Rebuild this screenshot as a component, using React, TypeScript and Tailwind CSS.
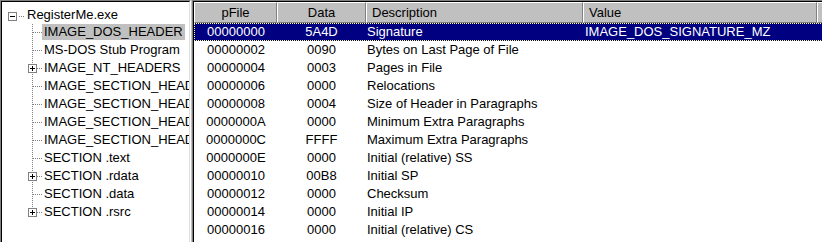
const tree = [
  { label: "IMAGE_DOS_HEADER", plus: false, selected: true },
  { label: "MS-DOS Stub Program", plus: false },
  { label: "IMAGE_NT_HEADERS", plus: true },
  { label: "IMAGE_SECTION_HEADER .text", plus: false },
  { label: "IMAGE_SECTION_HEADER .rdata", plus: false },
  { label: "IMAGE_SECTION_HEADER .data", plus: false },
  { label: "IMAGE_SECTION_HEADER .rsrc", plus: false },
  { label: "SECTION .text", plus: false },
  { label: "SECTION .rdata", plus: true },
  { label: "SECTION .data", plus: false },
  { label: "SECTION .rsrc", plus: true, last: true },
];

const rows = [
  ["00000000", "5A4D", "Signature", "IMAGE_DOS_SIGNATURE_MZ"],
  ["00000002", "0090", "Bytes on Last Page of File", ""],
  ["00000004", "0003", "Pages in File", ""],
  ["00000006", "0000", "Relocations", ""],
  ["00000008", "0004", "Size of Header in Paragraphs", ""],
  ["0000000A", "0000", "Minimum Extra Paragraphs", ""],
  ["0000000C", "FFFF", "Maximum Extra Paragraphs", ""],
  ["0000000E", "0000", "Initial (relative) SS", ""],
  ["00000010", "00B8", "Initial SP", ""],
  ["00000012", "0000", "Checksum", ""],
  ["00000014", "0000", "Initial IP", ""],
  ["00000016", "0000", "Initial (relative) CS", ""],
];

const ExpandBox = ({ x, y, plus }: { x: number; y: number; plus: boolean }) => (
  <g shapeRendering="crispEdges">
    <rect x={x + 0.5} y={y + 0.5} width={8} height={8} fill="white" stroke="#808080" />
    <line x1={x + 2} y1={y + 4.5} x2={x + 7} y2={y + 4.5} stroke="black" />
    {plus && <line x1={x + 4.5} y1={y + 2} x2={x + 4.5} y2={y + 7} stroke="black" />}
  </g>
);

const TreeRow = ({ label, plus, selected, last }: { label: string; plus: boolean; selected?: boolean; last?: boolean }) => (
  <div className="flex h-[18px] overflow-hidden whitespace-nowrap pl-[22px]">
    <svg width="18" height="18" className="shrink-0">
      <g stroke="#808080" strokeDasharray="1 1" shapeRendering="crispEdges">
        <line x1="8.5" y1="0" x2="8.5" y2={last ? 9 : 18} />
        <line x1="9" y1="8.5" x2="18" y2="8.5" />
      </g>
      {plus && <ExpandBox x={4} y={4} plus />}
    </svg>
    <span className={"h-[16px] min-w-0 overflow-hidden px-[2px] leading-[16px] text-black " + (selected ? "bg-[#c0c0c0]" : "")}>{label}</span>
  </div>
);

const TreePanel = () => (
  <div className="h-full w-[191px] shrink-0 border-l border-t border-r border-[#808080] border-r-white">
    <div className="h-full overflow-hidden border-l border-t border-r border-black border-r-[#dfdfdf] bg-white pt-[4px]">
      <div className="flex h-[18px] whitespace-nowrap pl-[2px]">
        <svg width="21" height="18" className="shrink-0">
          <line x1="15" y1="10.5" x2="21" y2="10.5" stroke="#808080" strokeDasharray="1 1" shapeRendering="crispEdges" />
          <ExpandBox x={4} y={6} plus={false} />
        </svg>
        <span className="h-[16px] px-[2px] leading-[18px]">RegisterMe.exe</span>
      </div>
      {tree.map((t) => (
        <TreeRow key={t.label} {...t} />
      ))}
    </div>
  </div>
);

const HeaderCell = ({ w, children, center }: { w: string; children?: string; center?: boolean }) => (
  <div className={`${w} h-[21px] shrink-0 border-t border-l border-white border-r border-r-[#808080] border-b border-b-[#808080] leading-[19px] ${center ? "text-center" : "pl-[5px]"}`}>
    {children}
  </div>
);

const ListPanel = () => (
  <div className="h-full flex-1 border-l border-t border-[#808080]">
    <div className="h-full overflow-hidden border-l border-t border-black bg-white">
      <div className="flex bg-[#c0c0c0] text-black">
        <HeaderCell w="w-[83px]" center>pFile</HeaderCell>
        <HeaderCell w="w-[89px]" center>Data</HeaderCell>
        <HeaderCell w="w-[217px]">Description</HeaderCell>
        <HeaderCell w="w-[234px]">Value</HeaderCell>
        <HeaderCell w="w-[60px]" />
      </div>
      {rows.map((r, i) => (
        <div
          key={r[0]}
          className={
            "flex h-[18px] whitespace-nowrap leading-[16px] " +
            (i === 0 ? "border border-dotted border-[#ffff80] bg-[#000080] text-white" : "border border-transparent text-black")
          }
        >
          <div className="w-[82px] shrink-0 text-center">{r[0]}</div>
          <div className="w-[89px] shrink-0 text-center">{r[1]}</div>
          <div className="w-[217px] shrink-0 pl-[1px]">{r[2]}</div>
          <div className="w-[234px] shrink-0 pl-[2px]">{r[3]}</div>
        </div>
      ))}
    </div>
  </div>
);

export default function App() {
  return (
    <div className="flex h-[242px] w-[822px] gap-[1px] overflow-hidden bg-[#c0c0c0] text-[13px]" style={{ fontFamily: '"Liberation Sans", Arial, sans-serif' }}>
      <TreePanel />
      <ListPanel />
    </div>
  );
}
